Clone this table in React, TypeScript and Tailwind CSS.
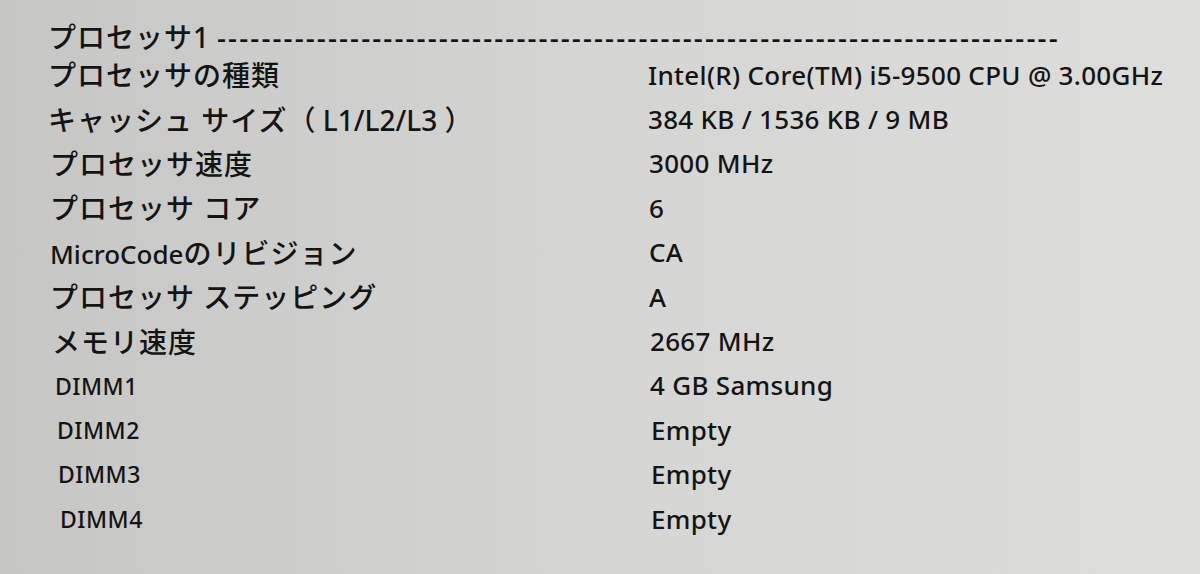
import React from "react";

type Row = { label: React.ReactNode; value: string; shift: string; vshift: string; small?: boolean };

const rows: Row[] = [
  { label: "プロセッサの種類", value: "Intel(R) Core(TM) i5-9500 CPU @ 3.00GHz", shift: "pl-[0px]", vshift: "pl-[0px]" },
  {
    label: (
      <>
        キャッシュ サイズ<span className="tracking-[0px]">（ L1/L2/L3 ）</span>
      </>
    ),
    value: "384 KB / 1536 KB / 9 MB",
    shift: "pl-[0px]",
    vshift: "pl-[0px]",
  },
  { label: "プロセッサ速度", value: "3000 MHz", shift: "pl-[2px]", vshift: "pl-[1px]" },
  { label: "プロセッサ コア", value: "6", shift: "pl-[2px]", vshift: "pl-[1px]" },
  {
    label: (
      <>
        <span className="text-[26px] tracking-[0px]">MicroCode</span>のリビジョン
      </>
    ),
    value: "CA",
    shift: "pl-[2px]",
    vshift: "pl-[1px]",
  },
  { label: "プロセッサ ステッピング", value: "A", shift: "pl-[2px]", vshift: "pl-[1px]" },
  { label: "メモリ速度", value: "2667 MHz", shift: "pl-[4px]", vshift: "pl-[2px]" },
  { label: "DIMM1", value: "4 GB Samsung", shift: "pl-[7px]", vshift: "pl-[2px]", small: true },
  { label: "DIMM2", value: "Empty", shift: "pl-[9px]", vshift: "pl-[3px]", small: true },
  { label: "DIMM3", value: "Empty", shift: "pl-[10px]", vshift: "pl-[3px]", small: true },
  { label: "DIMM4", value: "Empty", shift: "pl-[12px]", vshift: "pl-[3px]", small: true },
];

const App: React.FC = () => {
  return (
    <div
      className="w-[1200px] h-[574px] overflow-hidden bg-gradient-to-r from-[#c6c6c4] via-[#d5d5d3] to-[#dddddb] text-[#141414] font-medium pt-[21px] pl-[48px]"
      style={{ fontFamily: '"Noto Sans", "Noto Sans CJK JP", sans-serif' }}
    >
      {/* section header with dashed rule */}
      <div className="h-[32px] flex items-center">
        <span className="whitespace-nowrap text-[28px] tracking-[1px]">プロセッサ1</span>
        <span className="ml-[7px] whitespace-nowrap text-[28px] tracking-[2.1px] leading-none">
          {"-".repeat(76)}
        </span>
      </div>

      {rows.map((r, i) => (
        <div key={i} className="h-[44.4px] grid grid-cols-[600px_auto] items-center">
          <div
            className={`whitespace-nowrap ${r.shift} ${
              r.small ? "text-[23px] tracking-[0.5px]" : "text-[28px] tracking-[1px]"
            }`}
          >
            {r.label}
          </div>
          <div className={`whitespace-nowrap text-[26px] tracking-[0.3px] ${r.vshift}`}>{r.value}</div>
        </div>
      ))}
    </div>
  );
};

export default App;
